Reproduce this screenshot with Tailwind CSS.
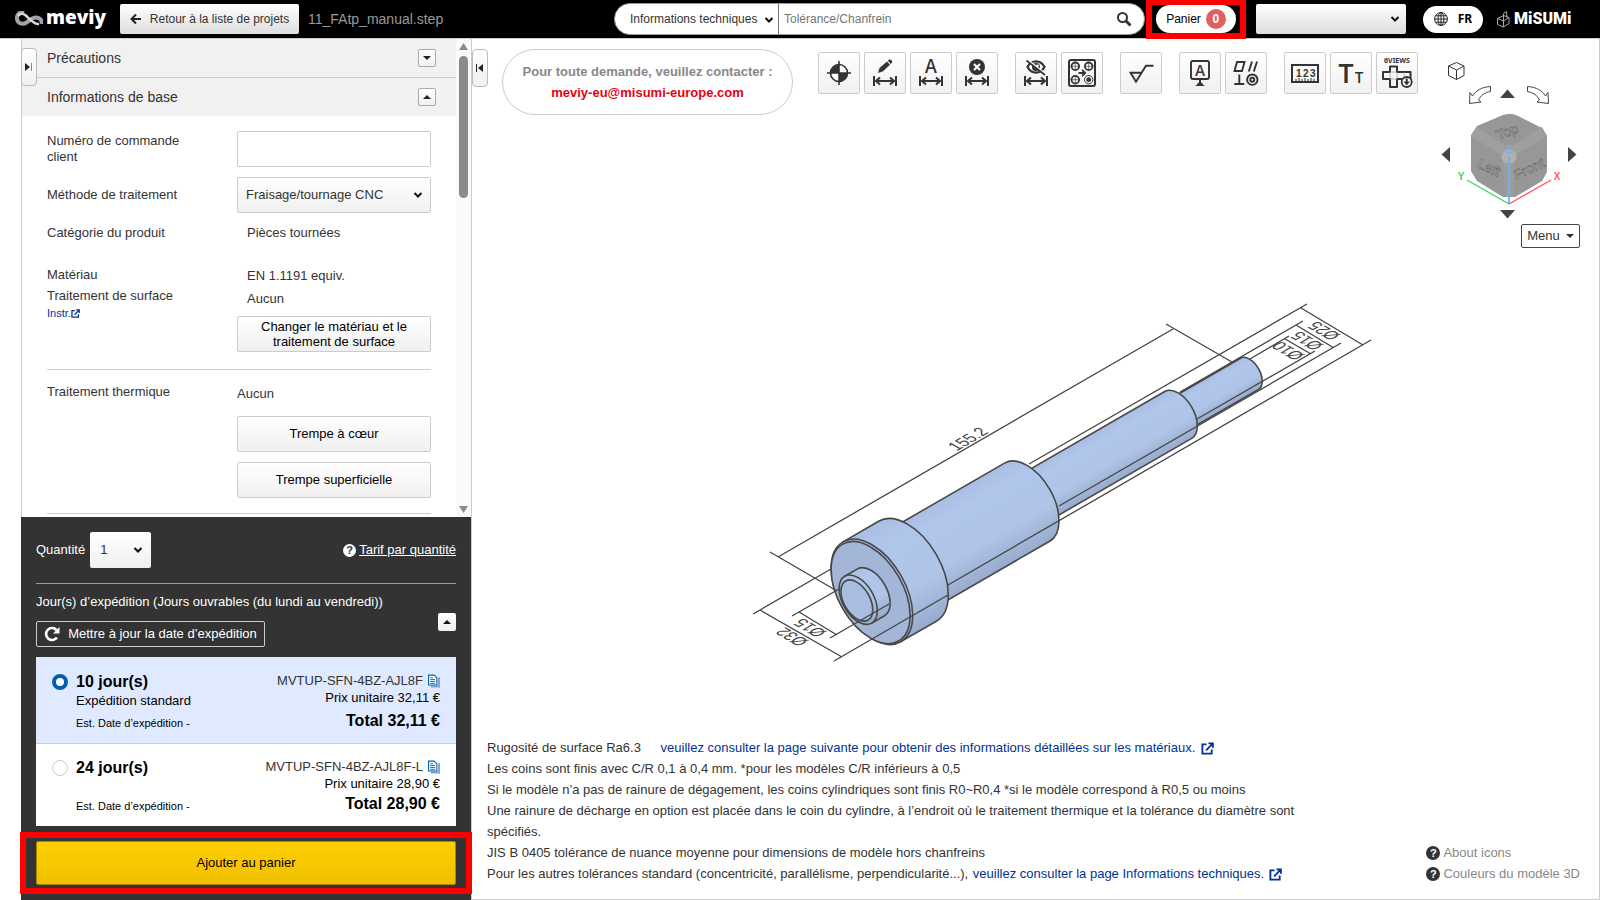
<!DOCTYPE html>
<html lang="fr">
<head>
    <meta charset="UTF-8">
    <meta name="viewport" content="width=device-width, initial-scale=1.0">
    <title>meviy - 11_FAtp_manual.step</title>
    <script src="https://cdn.jsdelivr.net/npm/@tailwindcss/browser@4"></script>
</head>
<body class="h-screen flex flex-col overflow-hidden bg-white text-[#333] text-[13px] font-['Liberation_Sans',Arial,sans-serif]">

    <!-- shared symbols -->
    <svg class="hidden">
        <symbol id="dim" viewBox="0 0 40 40">
            <path d="M9 23v10M31 23v10M11 28h18M15 24.500l-4 3.500 4 3.500M25 24.500l4 3.500-4 3.500" fill="none" stroke="#333" stroke-width="2"/>
        </symbol>
        <symbol id="chevron" viewBox="0 0 10 8">
            <path d="M1.500 2l3.500 3.500L8.500 2" fill="none" stroke="#111" stroke-width="2"/>
        </symbol>
        <symbol id="external" viewBox="0 0 14 14">
            <path d="M6 2.500H1.500v10h10V8M8 1.500h4.800v4.800M12.500 1.800L5.500 9" fill="none" stroke="#003399" stroke-width="2"/>
        </symbol>
        <symbol id="copy" viewBox="0 0 13 14">
            <path d="M3 13h9V3" fill="none" stroke="#7ba6d6" stroke-width="2"/>
            <path d="M.600.600h6l3 3v7.800h-9z" fill="#fff" stroke="#0060b0" stroke-width="1.200"/>
            <path d="M2.500 3.500h3M2.500 5.500h5M2.500 7.500h5M2.500 9.500h5" stroke="#0060b0"/>
        </symbol>
    </svg>

    <!-- top bar -->
    <header class="h-[39px] shrink-0 flex items-center bg-black border-b border-[#ccc] pl-[15px] pr-7">
        <a href="#" class="w-[90px] flex items-center gap-[3px] text-white" aria-label="meviy">
            <svg class="w-7 h-4 shrink-0" viewBox="0 0 28 16" fill="none">
                <path d="M9 2C4 .500 1.500 4 2 8c.500 4.500 5.500 6 9.500 3.500 4-3 6-5.500 10-5 4 .500 5.500 2.500 5 6.500" stroke="#a2a2a8" stroke-width="4"/>
                <path d="M3 5C5 2 8.500 2 11.500 5c4 4 8 8.500 12.500 8" stroke="#d8d8dc" stroke-width="2.500"/>
            </svg>
            <span class="text-[19px] leading-6 pb-1 font-extrabold font-['Open_Sans',sans-serif]">meviy</span>
        </a>
        <button class="ml-[15px] h-[30px] w-[179px] flex items-center justify-center gap-2 rounded-xs bg-linear-to-b from-white to-[#ddd] text-[12px]">
            <svg class="w-3 h-3" viewBox="0 0 12 12" fill="none" stroke="#222" stroke-width="2"><path d="M11 6H2M6 1.500L1.500 6 6 10.500"/></svg>
            Retour à la liste de projets
        </button>
        <span class="ml-[9px] text-sm text-[#999]">11_FAtp_manual.step</span>

        <form class="ml-auto w-[531px] h-8 flex items-center rounded-full bg-white border border-[#999] overflow-hidden text-[12px]">
            <div class="relative w-[164px] h-full border-r border-[#777]">
                <select aria-label="Type de recherche" class="appearance-none w-full h-full pl-[15px] outline-none">
                    <option>Informations techniques</option>
                </select>
                <svg class="absolute right-1 top-3 w-[10px] h-2 pointer-events-none"><use href="#chevron"/></svg>
            </div>
            <input type="text" aria-label="Recherche" placeholder="Tolérance/Chanfrein" class="flex-1 h-full pl-[5px] outline-none placeholder:text-[#757575]">
            <button type="button" aria-label="Rechercher" class="mr-3">
                <svg class="w-4 h-4" viewBox="0 0 16 16" fill="none" stroke="#333"><circle cx="6.500" cy="6.500" r="4.500" stroke-width="2"/><path d="M10 10l4.500 4.500" stroke-width="3"/></svg>
            </button>
        </form>

        <div class="relative ml-[11px]">
            <button class="w-20 h-7 flex items-center justify-center gap-[5px] rounded-full bg-white text-black text-[12px]">
                Panier
                <span class="size-5 rounded-full bg-[#e06060] text-white font-bold leading-5">0</span>
            </button>
            <div class="absolute -inset-x-[10px] -inset-y-[6px] border-[6px] border-[#f00] pointer-events-none"></div>
        </div>

        <div class="relative ml-5 w-[150px] h-[30px]">
            <select aria-label="Compte" class="appearance-none w-full h-full rounded-xs bg-linear-to-b from-white to-[#ddd]">
                <option></option>
            </select>
            <svg class="absolute right-[6px] top-[11px] w-[10px] h-2 pointer-events-none"><use href="#chevron"/></svg>
        </div>
        <button class="ml-[17px] w-[60px] h-[27px] flex items-center justify-center gap-[10px] rounded-full bg-white text-black text-[12px] font-bold font-['Noto_Sans',sans-serif]">
            <svg class="w-[14px] h-[14px]" viewBox="0 0 14 14" fill="none" stroke="#222"><circle cx="7" cy="7" r="6.400"/><ellipse cx="7" cy="7" rx="3" ry="6.400"/><path d="M7 .500v13M.500 7h13M1.500 3.800h11M1.500 10.200h11"/></svg>
            FR
        </button>
        <a href="#" class="ml-[14px] w-[75px] flex items-center gap-1 text-white" aria-label="MiSUMi">
            <svg class="w-[13px] h-[17px] shrink-0" viewBox="0 0 13 17" fill="none" stroke="#aaa"><path d="M.500 7.500l6-3 5.500 2v6l-5.500 3.500-6-2.500zM.500 7.500l6 2.500v6M6.500 10l5.500-3.500M6.500 10V2.500L9.500.500l.500 6"/></svg>
            <span class="text-base leading-5 font-black font-['Roboto',sans-serif]">MiSUMi</span>
        </a>
    </header>

    <div class="flex-1 min-h-0 flex">

        <!-- settings panel -->
        <aside class="relative ml-[21px] w-[451px] shrink-0 flex flex-col border-r border-[#ccc]">
            <button aria-label="Masquer" class="absolute left-0 top-[9px] w-4 h-[38px] flex items-center justify-center rounded-sm border border-[#bbb] bg-linear-to-b from-white to-[#f0f0f0]">
                <svg class="w-2 h-2" viewBox="0 0 8 8"><path d="M0 0l5 4-5 4z" fill="#222"/><path d="M6.500 0v8" stroke="#888"/></svg>
            </button>

            <div class="flex-1 min-h-0 flex overflow-hidden border-l border-[#ccc]">
                <div class="flex-1">
                    <div class="h-[39px] flex items-center justify-between pl-[25px] pr-5 bg-[#f1f1f1] border-b border-[#ccc]">
                        <h2 class="text-sm">Précautions</h2>
                        <button aria-label="Ouvrir" class="size-[18px] flex items-center justify-center rounded-xs border border-[#aaa] bg-linear-to-b from-white to-[#f0f0f0]">
                            <svg class="w-2 h-1" viewBox="0 0 8 4"><path d="M0 0h8L4 4z" fill="#222"/></svg>
                        </button>
                    </div>
                    <div class="h-[38px] flex items-center justify-between pl-[25px] pr-5 bg-[#f1f1f1]">
                        <h2 class="text-sm">Informations de base</h2>
                        <button aria-label="Fermer" class="size-[18px] flex items-center justify-center rounded-xs border border-[#aaa] bg-linear-to-b from-white to-[#f0f0f0]">
                            <svg class="w-2 h-1" viewBox="0 0 8 4"><path d="M0 4h8L4 0z" fill="#222"/></svg>
                        </button>
                    </div>

                    <div class="px-[25px] pt-[15px]">
                        <div class="grid grid-cols-[190px_1fr] items-center">
                            <label for="order-no" class="w-36 leading-4">Numéro de commande client</label>
                            <input id="order-no" type="text" class="h-9 rounded-xs border border-[#ccc] px-2">
                        </div>
                        <div class="mt-[10px] grid grid-cols-[190px_1fr] items-center">
                            <label for="method">Méthode de traitement</label>
                            <div class="relative h-9">
                                <select id="method" class="appearance-none w-full h-full pl-2 rounded-xs border border-[#ccc] bg-linear-to-b from-white to-[#f0f0f0]">
                                    <option>Fraisage/tournage CNC</option>
                                </select>
                                <svg class="absolute right-2 top-[14px] w-[10px] h-2 pointer-events-none"><use href="#chevron"/></svg>
                            </div>
                        </div>
                        <div class="mt-[10px] grid grid-cols-[190px_1fr] leading-5">
                            <span>Catégorie du produit</span>
                            <span class="pl-[10px]">Pièces tournées</span>
                        </div>
                        <div class="mt-[21px] grid grid-cols-[190px_1fr]">
                            <div class="leading-[21px]">
                                <p>Matériau</p>
                                <p>Traitement de surface</p>
                                <a href="#" class="flex items-center text-[11px] leading-[14px] text-[#003399]">Instr.<svg class="w-[9px] h-[9px]"><use href="#external"/></svg></a>
                            </div>
                            <div class="leading-[23px]">
                                <p class="pl-[10px]">EN 1.1191 equiv.</p>
                                <p class="pl-[10px]">Aucun</p>
                                <button class="mt-[6px] w-full h-9 px-5 leading-[15px] text-black rounded-xs border border-[#ccc] bg-linear-to-b from-white to-[#f0f0f0]">Changer le matériau et le traitement de surface</button>
                            </div>
                        </div>
                        <hr class="mt-4 border-[#ccc]">
                        <div class="mt-3 grid grid-cols-[190px_1fr]">
                            <span class="leading-5">Traitement thermique</span>
                            <div class="leading-6">
                                <p>Aucun</p>
                                <button class="mt-[10px] w-full h-9 text-black rounded-xs border border-[#ccc] bg-linear-to-b from-white to-[#f0f0f0]">Trempe à cœur</button>
                                <button class="mt-[10px] w-full h-9 text-black rounded-xs border border-[#ccc] bg-linear-to-b from-white to-[#f0f0f0]">Trempe superficielle</button>
                            </div>
                        </div>
                        <hr class="mt-[15px] border-[#ccc]">
                    </div>
                </div>
                <div class="w-[15px] flex flex-col items-center bg-[#fafafa] py-1">
                    <svg class="w-[9px] h-[7px]" viewBox="0 0 9 7"><path d="M0 7h9L4.500 0z" fill="#8a8a8a"/></svg>
                    <div class="mt-[6px] w-[9px] h-[142px] rounded-full bg-[#8a8a8a]"></div>
                    <svg class="mt-auto w-[9px] h-[7px]" viewBox="0 0 9 7"><path d="M0 0h9L4.500 7z" fill="#8a8a8a"/></svg>
                </div>
            </div>

            <!-- quote and cart -->
            <div class="bg-[#333] text-white px-[15px] pt-[15px] pb-[15px]">
                <div class="flex items-center justify-between">
                    <div class="flex items-center gap-[5px]">
                        <label for="qty">Quantité</label>
                        <div class="relative w-[61px] h-9">
                            <select id="qty" class="appearance-none w-full h-full pl-[10px] rounded-xs bg-linear-to-b from-white to-[#f0f0f0] text-[#333]">
                                <option>1</option>
                            </select>
                            <svg class="absolute right-2 top-[14px] w-[10px] h-2 pointer-events-none"><use href="#chevron"/></svg>
                        </div>
                    </div>
                    <a href="#" class="flex items-center gap-[3px]">
                        <span class="size-[13px] rounded-full bg-white text-[#333] text-[11px] leading-[13px] font-bold text-center">?</span>
                        <span class="underline">Tarif par quantité</span>
                    </a>
                </div>
                <hr class="mt-[15px] border-[#999]">
                <div class="mt-2 flex items-center justify-between">
                    <div>
                        <p class="leading-5">Jour(s) d’expédition (Jours ouvrables (du lundi au vendredi))</p>
                        <button class="mt-[9px] h-[26px] w-[229px] flex items-center justify-center gap-2 rounded-xs border border-[#ccc]">
                            <svg class="w-4 h-4" viewBox="0 0 16 16"><path d="M13 11.500A6 6 0 1 1 12.500 4" fill="none" stroke="#fff" stroke-width="2.600"/><path d="M15.500 1v6.500H9z" fill="#fff"/></svg>
                            Mettre à jour la date d’expédition
                        </button>
                    </div>
                    <button aria-label="Fermer" class="mt-1 size-[18px] flex items-center justify-center rounded-xs bg-linear-to-b from-white to-[#f0f0f0]">
                        <svg class="w-2 h-1" viewBox="0 0 8 4"><path d="M0 4h8L4 0z" fill="#111"/></svg>
                    </button>
                </div>

                <div class="mt-[10px] bg-white text-black">
                    <label class="h-[87px] flex px-4 pt-[15px] bg-[#dfe9ff] border-b border-[#ccc]">
                        <input type="radio" name="days" checked class="mt-[2px] appearance-none size-4 rounded-full border border-[#ccc] bg-white checked:border-4 checked:border-[#0060b0]">
                        <span class="ml-2 flex-1 flex flex-col">
                            <b class="text-base leading-5">10 jour(s)</b>
                            <span class="leading-[18px]">Expédition standard</span>
                            <span class="mt-[5px] text-[11px] leading-4">Est. Date d’expédition -</span>
                        </span>
                        <span class="flex flex-col items-end">
                            <span class="flex items-center gap-[5px] leading-[18px] text-[#333]">MVTUP-SFN-4BZ-AJL8F <svg class="w-3 h-[14px]"><use href="#copy"/></svg></span>
                            <span class="leading-4">Prix unitaire 32,11 €</span>
                            <b class="mt-[5px] text-base leading-5">Total 32,11 €</b>
                        </span>
                    </label>
                    <label class="h-[82px] flex px-4 pt-[14px]">
                        <input type="radio" name="days" class="mt-[2px] appearance-none size-4 rounded-full border border-[#ccc] bg-white checked:border-4 checked:border-[#0060b0]">
                        <span class="ml-2 flex-1 flex flex-col">
                            <b class="text-base leading-5">24 jour(s)</b>
                            <span class="mt-5 text-[11px] leading-4">Est. Date d’expédition -</span>
                        </span>
                        <span class="flex flex-col items-end">
                            <span class="flex items-center gap-[5px] leading-[18px] text-[#333]">MVTUP-SFN-4BZ-AJL8F-L <svg class="w-3 h-[14px]"><use href="#copy"/></svg></span>
                            <span class="leading-4">Prix unitaire 28,90 €</span>
                            <b class="mt-[2px] text-base leading-5">Total 28,90 €</b>
                        </span>
                    </label>
                </div>

                <div class="relative mt-[15px]">
                    <button class="w-full h-11 rounded-xs border border-[#a88a00] bg-linear-to-b from-[#ffcf00] to-[#f0c000] text-black">Ajouter au panier</button>
                    <div class="absolute -inset-x-4 -inset-y-[9px] z-10 border-[6px] border-[#f00] pointer-events-none"></div>
                </div>
            </div>
        </aside>

        <!-- 3D viewer -->
        <main class="relative flex-1 flex flex-col justify-between border-r border-b border-[#ccc]">
            <svg class="absolute inset-0 w-full h-full" viewBox="472 39 1127 860" role="img" aria-label="Modèle 3D">
                <defs>
                    <linearGradient id="body" x1="0" y1="0" x2="0" y2="1">
                        <stop offset="0" stop-color="#a9bee2"/>
                        <stop offset=".200" stop-color="#b0c6ea"/>
                        <stop offset=".650" stop-color="#afc4e7"/>
                        <stop offset="1" stop-color="#98abcd"/>
                    </linearGradient>
                </defs>
                <!-- x runs along the part's axis -->
                <g transform="translate(871.900 591.800) rotate(-30)" stroke="#484848" stroke-width="1.600" fill="url(#body)">
                    <path d="M345-18H436A10.400 18 0 0 1 436 18H345z"/>
                    <path d="M170-27H353.700A15.600 27 0 0 1 353.700 27H170z"/>
                    <path d="M30-45.100H179.200A26 45.100 0 0 1 179.200 45.100H30z"/>
                    <path d="M0-57.700H41.100A33.300 57.700 0 0 1 41.100 57.700H0z"/>
                    <ellipse cx="0" cy="0" rx="33.300" ry="57.700"/>
                    <ellipse cx="-1.500" cy="0" rx="32.200" ry="55.900" fill="#a4b6d8"/>
                    <path d="M-15.800-27H-1A15.600 27 0 0 1-1 27H-15.800z"/>
                    <ellipse cx="-15.800" cy="0" rx="15.600" ry="27"/>
                    <ellipse cx="-17.400" cy="0" rx="13" ry="22.500" fill="#a9bde0"/>
                </g>
                <!-- dimension lines -->
                <path d="M753 614L831 569M834 661L948 595M760 610L842 657
                         M792 616L839 589M830 638L889 604M799 612L837 635
                         M770 552L837 591M778 557L1173 329M1166 324L1232 362
                         M1307 304L1029 464M948 585L1371 340M1301 308L1363 345
                         M1303 321L1180 392M1341 343L1059 506M1296 325L1334 348
                         M1289 336L1250 359M1315 351L1197 419M1285 339L1311 354" stroke="#444" stroke-width="1.300" fill="none"/>
                <g font-size="15" fill="#444" text-anchor="middle" font-family="Liberation Sans, sans-serif">
                    <text transform="translate(973 442) rotate(-30) skewX(30)">155.2</text>
                    <text transform="translate(797 634) rotate(210) skewX(-30)">Ø32</text>
                    <text transform="translate(815 625) rotate(210) skewX(-30)">Ø15</text>
                    <text transform="translate(1329 328) rotate(210) skewX(-30)">Ø25</text>
                    <text transform="translate(1312 338) rotate(210) skewX(-30)">Ø15</text>
                    <text transform="translate(1293 348) rotate(210) skewX(-30)">Ø10</text>
                </g>
            </svg>

            <div class="relative flex items-start pl-[30px] pr-[19px] pt-[10px]">
                <button aria-label="Afficher" class="absolute left-0 top-[10px] w-4 h-[38px] flex items-center justify-center rounded-sm border border-[#bbb] bg-linear-to-b from-white to-[#f0f0f0]">
                    <svg class="w-2 h-2" viewBox="0 0 8 8"><path d="M7 0L2 4l5 4z" fill="#222"/><path d="M.500 0v8" stroke="#222"/></svg>
                </button>
                <div class="w-[291px] h-[66px] flex flex-col items-center justify-center rounded-full border border-[#ccc] bg-white font-bold leading-[21px]">
                    <span class="text-[#888]">Pour toute demande, veuillez contacter :</span>
                    <a href="mailto:meviy-eu@misumi-europe.com" class="text-[#e60012]">meviy-eu@misumi-europe.com</a>
                </div>

                <div class="ml-[25px] mt-[3px] flex gap-[17px]">
                    <div class="flex gap-1">
                        <button aria-label="Origine" class="size-[42px] rounded-xs border border-[#ccc] bg-linear-to-b from-white to-[#f0f0f0]">
                            <svg class="size-10" viewBox="0 0 40 40"><circle cx="20" cy="20" r="8.500" fill="#fff" stroke="#333" stroke-width="1.600"/><path d="M20 20v-8.500a8.500 8.500 0 0 0-8.500 8.500zM20 20v8.500a8.500 8.500 0 0 0 8.500-8.500z" fill="#333"/><path d="M20 8v24M8 20h24" stroke="#333" stroke-width="1.600"/></svg>
                        </button>
                        <button aria-label="Modifier la cote" class="size-[42px] rounded-xs border border-[#ccc] bg-linear-to-b from-white to-[#f0f0f0]">
                            <svg class="size-10" viewBox="0 0 40 40"><use href="#dim"/><path d="M13 20l1.500-5L22 8.500l3 3.200-7 6.500zM22.800 7.800L24 6.800c1.500-1 4 1 3 3L25.800 11z" fill="#333"/></svg>
                        </button>
                        <button aria-label="Cote automatique" class="size-[42px] rounded-xs border border-[#ccc] bg-linear-to-b from-white to-[#f0f0f0]">
                            <svg class="size-10" viewBox="0 0 40 40"><use href="#dim"/><text x="20" y="20" font-size="18" font-weight="500" text-anchor="middle" font-family="Inter, sans-serif" fill="#333">A</text></svg>
                        </button>
                        <button aria-label="Supprimer la cote" class="size-[42px] rounded-xs border border-[#ccc] bg-linear-to-b from-white to-[#f0f0f0]">
                            <svg class="size-10" viewBox="0 0 40 40"><use href="#dim"/><circle cx="20" cy="14" r="8" fill="#333"/><path d="M17 11l6 6M23 11l-6 6" stroke="#fff" stroke-width="2.200"/></svg>
                        </button>
                    </div>
                    <div class="flex gap-1">
                        <button aria-label="Masquer les cotes" class="size-[42px] rounded-xs border border-[#ccc] bg-linear-to-b from-white to-[#f0f0f0]">
                            <svg class="size-10" viewBox="0 0 40 40"><use href="#dim"/><path d="M11.500 14c4-7.500 13-7.500 17 0-4 7.500-13 7.500-17 0z" fill="none" stroke="#333" stroke-width="2.200"/><circle cx="20" cy="14" r="4" fill="#333"/><circle cx="21.500" cy="12.800" r="1.400" fill="#fff"/><path d="M11.500 7L30 22" stroke="#fff" stroke-width="2.500"/><path d="M10.500 7.500L29 22" stroke="#333" stroke-width="1.600"/></svg>
                        </button>
                        <button aria-label="Grouper les trous" class="size-[42px] rounded-xs border border-[#ccc] bg-linear-to-b from-white to-[#f0f0f0]">
                            <svg class="size-10" viewBox="0 0 40 40" fill="none" stroke="#333"><rect x="7" y="7" width="26" height="26" rx="2" stroke-width="2"/><g stroke-width="1.800"><circle cx="13.300" cy="13.300" r="3.800"/><circle cx="26.700" cy="13.300" r="3.800"/><circle cx="13.300" cy="26.700" r="3.800"/><path d="M16.500 20h6M20 16.800l3.200 3.200-3.200 3.200"/></g><path d="M13.300 8.500v9.600M8.500 13.300h9.600M26.700 8.500v9.600M21.900 13.300h9.600M13.300 21.900v9.600M8.500 26.700h9.600" stroke-width=".600"/><circle cx="26.700" cy="26.700" r="4.200"/><circle cx="26.700" cy="26.700" r="2" fill="#333"/></svg>
                        </button>
                    </div>
                    <button aria-label="Rugosité" class="size-[42px] rounded-xs border border-[#ccc] bg-linear-to-b from-white to-[#f0f0f0]">
                        <svg class="size-10" viewBox="0 0 40 40"><path d="M20.500 19.700H9.500l5.500 9L25 12.800h7.500" fill="none" stroke="#333" stroke-width="1.900"/></svg>
                    </button>
                    <div class="flex gap-1">
                        <button aria-label="Référence" class="size-[42px] rounded-xs border border-[#ccc] bg-linear-to-b from-white to-[#f0f0f0]">
                            <svg class="size-10" viewBox="0 0 40 40"><rect x="11" y="8" width="18" height="18" rx="2" fill="none" stroke="#333" stroke-width="1.900"/><path d="M20 26v4" stroke="#333" stroke-width="2"/><path d="M20 28l4.500 5h-9z" fill="#333"/><text x="20" y="22.500" font-size="15" font-weight="500" text-anchor="middle" font-family="Inter, sans-serif" fill="#333">A</text></svg>
                        </button>
                        <button aria-label="Tolérance géométrique" class="size-[42px] rounded-xs border border-[#ccc] bg-linear-to-b from-white to-[#f0f0f0]">
                            <svg class="size-10" viewBox="0 0 40 40" fill="none" stroke="#333" stroke-width="1.900"><path d="M8.500 18l2.500-9h7.500l-2.500 9zM22.800 18.500L26 8.500M27.800 18.500L31 8.500M13.300 21.500v9.500M8.300 31h10"/><circle cx="26.300" cy="26.700" r="5.200"/><circle cx="26.300" cy="26.700" r="2"/></svg>
                        </button>
                    </div>
                    <div class="flex gap-1">
                        <button aria-label="Mesurer" class="size-[42px] rounded-xs border border-[#ccc] bg-linear-to-b from-white to-[#f0f0f0]">
                            <svg class="size-10" viewBox="0 0 40 40"><rect x="7" y="12" width="26" height="17" fill="none" stroke="#333" stroke-width="2"/><path d="M11 29v-3M14 29v-4M17 29v-3M20 29v-4M23 29v-3M26 29v-4M29 29v-3" stroke="#333"/><g font-size="10" font-weight="700" font-family="Liberation Sans, sans-serif" fill="#333"><text x="11" y="23.500">1</text><text x="18" y="23.500">2</text><text x="25" y="23.500">3</text></g></svg>
                        </button>
                        <button aria-label="Taille du texte" class="size-[42px] rounded-xs border border-[#ccc] bg-linear-to-b from-white to-[#f0f0f0]">
                            <svg class="size-10" viewBox="0 0 40 40" font-weight="600" text-anchor="middle" font-family="Inter, sans-serif" fill="#333"><text x="15" y="30" font-size="25">T</text><text x="28" y="30" font-size="14">T</text></svg>
                        </button>
                        <button aria-label="6 vues" class="size-[42px] rounded-xs border border-[#ccc] bg-linear-to-b from-white to-[#f0f0f0]">
                            <svg class="size-10" viewBox="0 0 40 40"><text x="20" y="10" font-size="7" font-weight="700" text-anchor="middle" font-family="Noto Sans, sans-serif" fill="#333">6VIEWS</text><path d="M13 19v-5.500h7V19h13.500v7H20v8h-7v-8H6v-7z" fill="none" stroke="#333" stroke-width="2" stroke-linejoin="round"/><path d="M13 19h7v7h-7zM27 19v7" fill="none" stroke="#999" stroke-width=".700"/><circle cx="29.700" cy="29" r="5" fill="#fff" stroke="#333" stroke-width="1.800"/><path d="M29.700 25.500v4" stroke="#333" stroke-width="2"/><path d="M26.500 28.500h6.400l-3.200 4z" fill="#333"/></svg>
                        </button>
                    </div>
                </div>

                <!-- orientation cube -->
                <div class="ml-auto mt-3 flex flex-col items-end">
                    <svg class="w-[142px] h-[161px]" viewBox="1438 61 142 161">
                        <path d="M1456.500 62.500l7.500 3.500v9.500l-7.500 4-8-4V66zM1448.500 66l8 4 7.500-4M1456.500 70v9.500" fill="#fff" stroke="#333"/>
                        <path d="M1490.500 86.500v5c-6 1-10 4-12 8.500l2.500 2-11.500 1.500.500-11 2.500 3.500c3-5 9-9 18-9.500zM1527.500 86.500v5c6 1 10 4 12 8.500l-2.500 2 11.500 1.500-.500-11-2.500 3.500c-3-5-9-9-18-9.500z" fill="#fff" stroke="#444"/>
                        <path d="M1500 98h15l-7.500-8.500zM1500 210h15l-7.500 8.500zM1450 147v15l-8.500-7.500zM1568 147v15l8.500-7.500z" fill="#444"/>
                        <path d="M1503 115l5-1h4l4 1 26 13 5 8v36l-5 9-27 16h-12l-26-16-6-10v-36l6-9z" fill="#979797"/>
                        <path d="M1471 136l6-9 32 21 33-21 5 9-33 20-5 7-6-7z" fill="#9f9f9f"/>
                        <path d="M1503 158h12l-2 38h-8z" fill="#9d9d9d"/>
                        <path d="M1509 148l6 4 2 6-4 5h-8l-4-5 2-6z" fill="#b0b0b0"/>
                        <g font-family="Liberation Sans, sans-serif" font-size="14" fill="#b5b5b5" stroke="#5c5c5c" stroke-width=".500" text-anchor="middle">
                            <text transform="translate(1509 136) rotate(-22)">Top</text>
                            <text transform="translate(1487 172) rotate(25)">Left</text>
                            <text transform="translate(1531 173) rotate(-26)">Front</text>
                        </g>
                        <path d="M1509 157v47" stroke="#6fb1f5" stroke-width="1.800"/>
                        <path d="M1509 204l-42-24" stroke="#3fd060" stroke-width="1.300"/>
                        <path d="M1509 204l42-24" stroke="#f55" stroke-width="1.300"/>
                        <g font-family="Liberation Sans, sans-serif" font-size="10" font-weight="700" text-anchor="middle">
                            <text x="1509" y="153" fill="#6fb1f5">Z</text>
                            <text x="1461" y="180" fill="#3fd060">Y</text>
                            <text x="1557" y="180" fill="#f66">X</text>
                        </g>
                    </svg>
                    <button class="mt-[2px] w-[59px] h-6 flex items-center justify-center gap-[6px] rounded-xs border border-[#444] bg-white">
                        Menu
                        <svg class="w-2 h-1" viewBox="0 0 8 4"><path d="M0 0h8L4 4z" fill="#333"/></svg>
                    </button>
                </div>
            </div>

            <div class="relative flex items-end justify-between pl-[15px] pr-[19px] pb-[15px] leading-[21px]">
                <div class="max-w-[830px]">
                    <p>Rugosité de surface Ra6.3 <a href="#" class="ml-4 text-[#003399]">veuillez consulter la page suivante pour obtenir des informations détaillées sur les matériaux. <svg class="inline w-[13px] h-[13px] ml-[2px]"><use href="#external"/></svg></a></p>
                    <p>Les coins sont finis avec C/R 0,1 à 0,4 mm. *pour les modèles C/R inférieurs à 0,5</p>
                    <p>Si le modèle n’a pas de rainure de dégagement, les coins cylindriques sont finis R0~R0,4 *si le modèle correspond à R0,5 ou moins</p>
                    <p>Une rainure de décharge en option est placée dans le coin du cylindre, à l’endroit où le traitement thermique et la tolérance du diamètre sont spécifiés.</p>
                    <p>JIS B 0405 tolérance de nuance moyenne pour dimensions de modèle hors chanfreins</p>
                    <p>Pour les autres tolérances standard (concentricité, parallélisme, perpendicularité...), <a href="#" class="ml-px text-[#003399]">veuillez consulter la page Informations techniques. <svg class="inline w-[13px] h-[13px] ml-px"><use href="#external"/></svg></a></p>
                </div>
                <div class="flex flex-col text-[#888]">
                    <a href="#" class="flex items-center gap-[3px]"><span class="size-[14px] rounded-full bg-[#333] text-white text-[11px] leading-[14px] font-bold text-center">?</span>About icons</a>
                    <a href="#" class="flex items-center gap-[3px]"><span class="size-[14px] rounded-full bg-[#333] text-white text-[11px] leading-[14px] font-bold text-center">?</span>Couleurs du modèle 3D</a>
                </div>
            </div>
        </main>
    </div>
</body>
</html>
